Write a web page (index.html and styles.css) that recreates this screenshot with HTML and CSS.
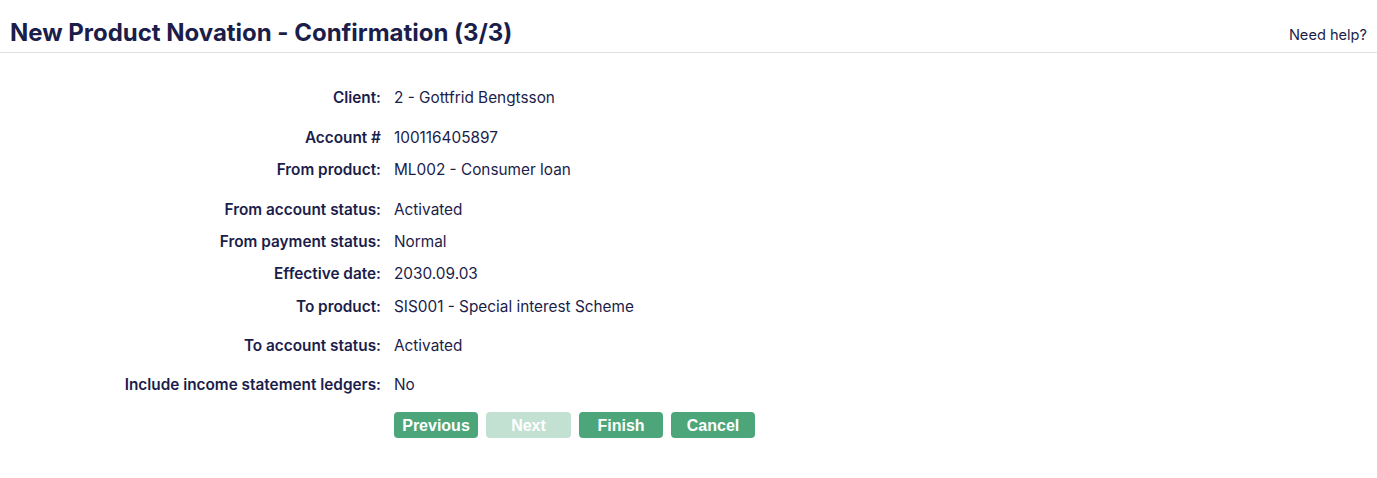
FILE: index.html
```html
<!DOCTYPE html>
<html>
<head>
<meta charset="utf-8">
<link rel="stylesheet" href="styles.css">
</head>
<body>
<header class="header">
  <h1 class="title">New Product Novation - Confirmation (3/3)</h1>
  <a class="help" href="#">Need help?</a>
</header>
<main class="form">
  <div class="row r40"><div class="label">Client:</div><div class="value">2 - Gottfrid Bengtsson</div></div>
  <div class="row r32"><div class="label">Account #</div><div class="value">100116405897</div></div>
  <div class="row r40"><div class="label">From product:</div><div class="value">ML002 - Consumer loan</div></div>
  <div class="row r32"><div class="label">From account status:</div><div class="value">Activated</div></div>
  <div class="row r32"><div class="label">From payment status:</div><div class="value">Normal</div></div>
  <div class="row r33"><div class="label">Effective date:</div><div class="value">2030.09.03</div></div>
  <div class="row r39"><div class="label">To product:</div><div class="value">SIS001 - Special interest Scheme</div></div>
  <div class="row r39"><div class="label">To account status:</div><div class="value">Activated</div></div>
  <div class="row r41"><div class="label">Include income statement ledgers:</div><div class="value">No</div></div>
  <div class="actions">
    <button class="btn">Previous</button>
    <button class="btn disabled">Next</button>
    <button class="btn">Finish</button>
    <button class="btn">Cancel</button>
  </div>
</main>
</body>
</html>
```
FILE: styles.css
```css
html, body {
  margin: 0;
  padding: 0;
  background: #ffffff;
  font-family: Inter, "Noto Sans", sans-serif;
  color: #1b1d4a;
}
.header {
  display: flex;
  align-items: flex-end;
  justify-content: space-between;
  height: 53px;
  border-bottom: 1px solid #e0e0e0;
  padding: 0 10px 0 10px;
  box-sizing: border-box;
}
.title {
  margin: 0 0 4px 0;
  font-size: 24px;
  font-weight: 700;
  line-height: 30px;
  color: #1b1d4a;
  letter-spacing: -0.02px;
}
.help {
  font-size: 14.6px;
  color: #1b1d4a;
  text-decoration: none;
  margin-bottom: 8px;
  line-height: 18px;
}
.form {
  padding-top: 29px;
}
.row {
  display: grid;
  grid-template-columns: 381px 1fr;
  column-gap: 13px;
  font-size: 15.35px;
  line-height: 32px;
  height: 32px;
}
.r40 { margin-bottom: 8px; }
.r33 { margin-bottom: 1px; }
.r39 { margin-bottom: 7px; }
.r41 { margin-bottom: 11px; }
.label {
  text-align: right;
  font-weight: 600;
}
.value {
  font-weight: 400;
}
.actions {
  display: flex;
  gap: 8px;
  padding-left: 394px;
}
.btn {
  width: 84px;
  height: 26px;
  border: none;
  border-radius: 4px;
  background: #4ca67a;
  color: #ffffff;
  font-family: "Liberation Sans", Arial, sans-serif;
  font-weight: 700;
  font-size: 16px;
  line-height: 26px;
  padding: 1px 0 0 0;
  cursor: pointer;
}
.btn.disabled {
  background: #c3e1d2;
  width: 85px;
}
```
